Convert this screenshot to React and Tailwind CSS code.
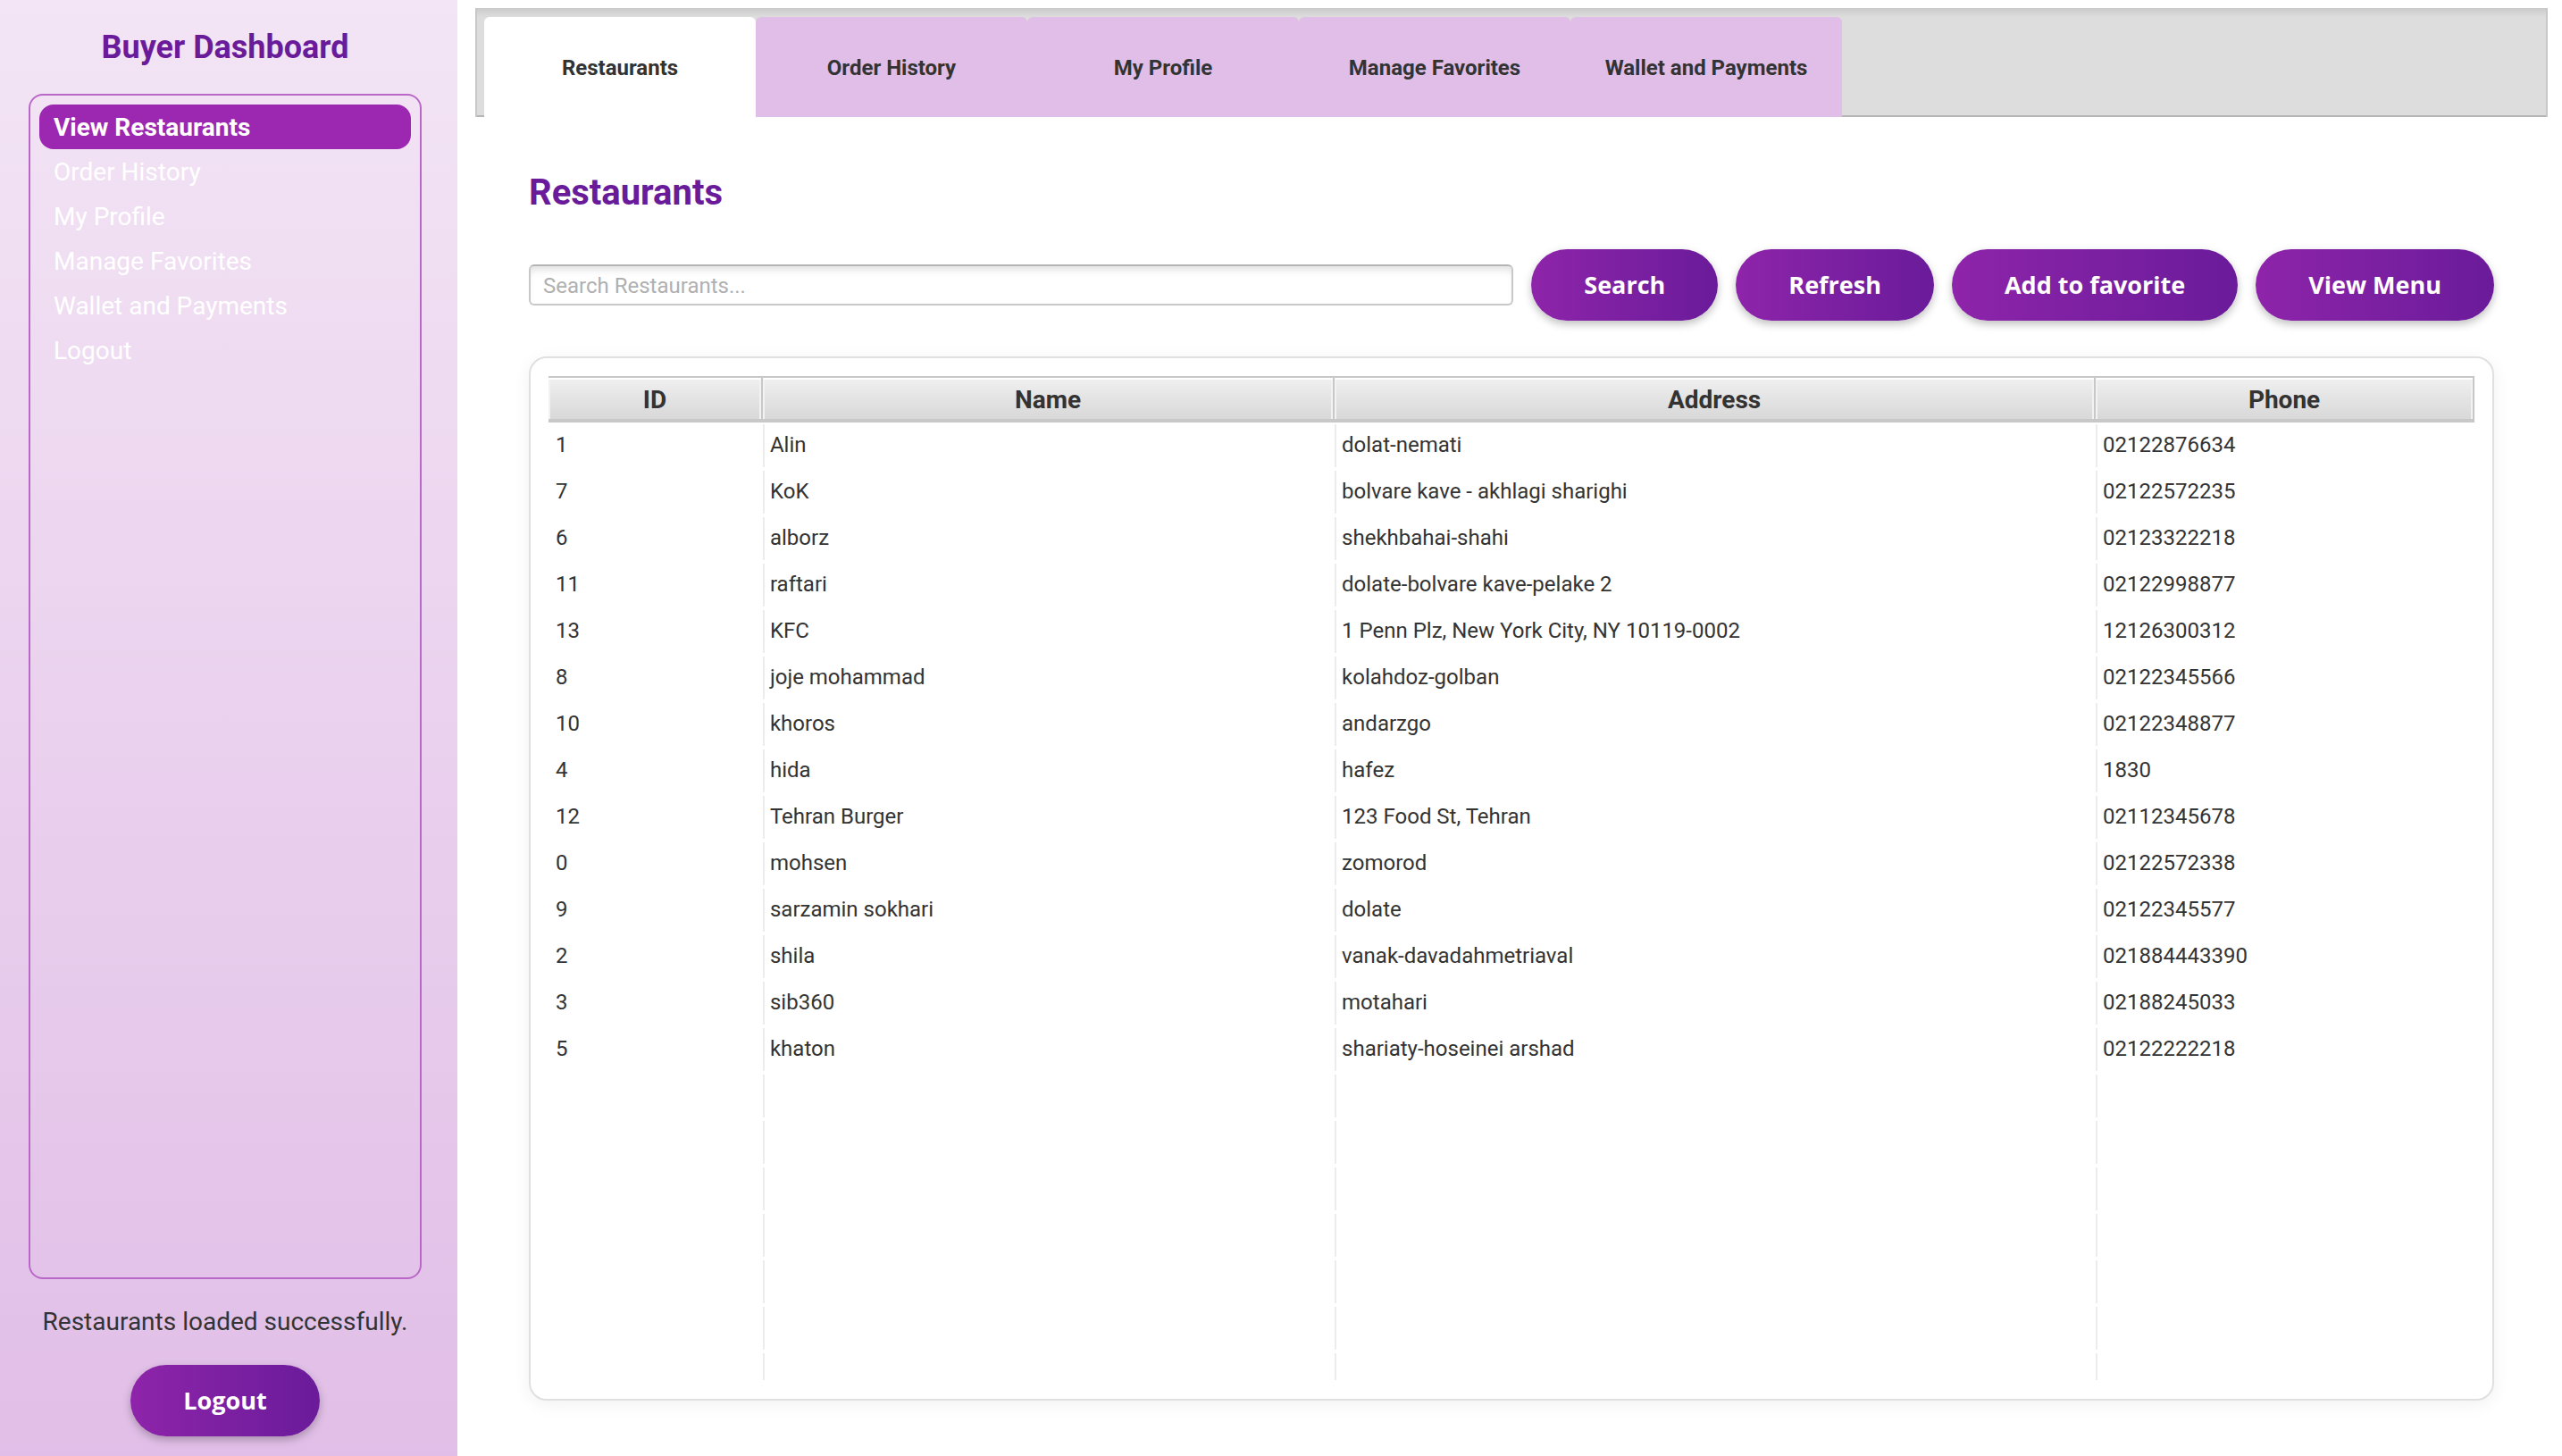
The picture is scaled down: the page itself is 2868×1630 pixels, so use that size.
const NAV = ["View Restaurants", "Order History", "My Profile", "Manage Favorites", "Wallet and Payments", "Logout"];
const TABS = ["Restaurants", "Order History", "My Profile", "Manage Favorites", "Wallet and Payments"];
const ACTIONS = ["Search", "Refresh", "Add to favorite", "View Menu"];
const ROWS = [
  ["1", "Alin", "dolat-nemati", "02122876634"],
  ["7", "KoK", "bolvare kave - akhlagi sharighi", "02122572235"],
  ["6", "alborz", "shekhbahai-shahi", "02123322218"],
  ["11", "raftari", "dolate-bolvare kave-pelake 2", "02122998877"],
  ["13", "KFC", "1 Penn Plz, New York City, NY 10119-0002", "12126300312"],
  ["8", "joje mohammad", "kolahdoz-golban", "02122345566"],
  ["10", "khoros", "andarzgo", "02122348877"],
  ["4", "hida", "hafez", "1830"],
  ["12", "Tehran Burger", "123 Food St, Tehran", "02112345678"],
  ["0", "mohsen", "zomorod", "02122572338"],
  ["9", "sarzamin sokhari", "dolate", "02122345577"],
  ["2", "shila", "vanak-davadahmetriaval", "021884443390"],
  ["3", "sib360", "motahari", "02188245033"],
  ["5", "khaton", "shariaty-hoseinei arshad", "02122222218"],
];
const EMPTY_ROWS = 7;
const COLUMNS = [
  { label: "ID", width: "w-[11.13%]" },
  { label: "Name", width: "w-[29.69%]" },
  { label: "Address", width: "w-[39.52%]" },
  { label: "Phone", width: "w-[19.66%]" },
];

function PillButton({ children }) {
  return (
    <button
      type="button"
      className="h-20 shrink-0 whitespace-nowrap rounded-full bg-linear-to-r from-[#8e24aa] to-[#6a1b9a] px-[59px] font-['Open_Sans',sans-serif] text-[27px] font-bold leading-10 text-white shadow-[0_4px_10px_rgba(0,0,0,0.25)]"
    >
      {children}
    </button>
  );
}

function Sidebar() {
  return (
    <aside className="flex w-[512px] shrink-0 flex-col items-center bg-linear-to-b from-[#f3e5f5] to-[#e1bee7] px-8 pt-8 pb-[22px]">
      <h1 className="mr-2 text-[36px] font-bold leading-[42px] text-[#6a1b9a]">Buyer Dashboard</h1>
      <nav className="mt-[31px] mr-2 w-[440px] flex-1 rounded-2xl border-2 border-[#ba68c8] p-2.5">
        <ul>
          {NAV.map((label, i) => (
            <li key={label}>
              <a
                href="#"
                className={
                  i === 0
                    ? "block rounded-2xl bg-[#9c27b0] px-4 pt-0.5 text-[28px] font-bold leading-[48px] text-white"
                    : "block px-4 pt-0.5 text-[28px] leading-[48px] text-white"
                }
              >
                {label}
              </a>
            </li>
          ))}
        </ul>
      </nav>
      <p className="mt-8 mr-2 text-[28px] leading-8 text-[#333]">Restaurants loaded successfully.</p>
      <div className="mt-8 mr-2 flex">
        <PillButton>Logout</PillButton>
      </div>
    </aside>
  );
}

function TabBar() {
  return (
    <div
      role="tablist"
      className="flex h-[122px] border-x-2 border-[#c8c8c8] bg-linear-to-b from-[#cacaca] to-[#ddd] to-[10px] px-2 pt-2.5 shadow-[inset_0_-2px_0_#b5b5b5]"
    >
      {TABS.map((label, i) => (
        <button
          key={label}
          type="button"
          role="tab"
          aria-selected={i === 0}
          className={
            i === 0
              ? "w-[304px] rounded-t-md bg-white pt-0.5 text-[24px] font-bold leading-7 text-[#333]"
              : "w-[304px] rounded-t-md bg-[#e1bee7] pt-0.5 text-[24px] font-bold leading-7 text-[#333]"
          }
        >
          {label}
        </button>
      ))}
    </div>
  );
}

function RestaurantTable() {
  return (
    <div className="mt-10 flex-1 overflow-hidden rounded-[20px] border-2 border-[#e0e0e0] bg-white p-5 shadow-[0_4px_20px_rgba(0,0,0,0.06)]">
      <div className="h-[1124px] overflow-hidden">
        <table className="w-full table-fixed border-separate border-spacing-0 text-left text-[24px] text-[#333]">
          <thead>
            <tr>
              {COLUMNS.map((c) => (
                <th
                  key={c.label}
                  scope="col"
                  className={`${c.width} h-[52px] border-t-2 border-r-2 border-b-4 border-[#c8c8c8] bg-linear-to-b from-[#f0f0f0] to-[#d8d8d8] p-0 pt-1 text-center text-[28px] font-bold leading-8 shadow-[inset_0_2px_0_#fff,inset_2px_0_0_#f2f2f2,inset_-2px_0_0_#f2f2f2]`}
                >
                  {c.label}
                </th>
              ))}
            </tr>
          </thead>
          <tbody>
            {ROWS.map((row) => (
              <tr key={row[0]}>
                {row.map((cell, i) => (
                  <td key={i} className="h-[52px] p-0">
                    <div className={i > 0 ? "h-12 truncate border-l-2 border-[#ececec] pl-1.5 leading-[46px]" : "h-12 truncate pl-2 leading-[46px]"}>
                      {cell}
                    </div>
                  </td>
                ))}
              </tr>
            ))}
            {Array.from({ length: EMPTY_ROWS }, (_, r) => (
              <tr key={`empty-${r}`}>
                {COLUMNS.map((c, i) => (
                  <td key={c.label} className="h-[52px] p-0">
                    <div className={i > 0 ? "h-12 border-l-2 border-[#ececec]" : "h-12"} />
                  </td>
                ))}
              </tr>
            ))}
          </tbody>
        </table>
      </div>
    </div>
  );
}

export default function App() {
  return (
    <div className="flex min-h-screen bg-white font-[Roboto,sans-serif] text-[#333]">
      <Sidebar />
      <main className="flex min-w-0 flex-1 flex-col pt-[9px] pr-4 pl-5">
        <TabBar />
        <section className="flex flex-1 flex-col px-[60px] pt-[61px] pb-[62px]">
          <h2 className="text-[40px] font-bold leading-12 text-[#6a1b9a]">Restaurants</h2>
          <div className="mt-[39px] flex items-center gap-5">
            <input
              type="text"
              aria-label="Search Restaurants"
              placeholder="Search Restaurants..."
              className="h-[46px] min-w-0 flex-1 rounded-md border-2 border-[#c8c8c8] border-t-[#b5b5b5] bg-white px-3.5 pt-0.5 text-[24px] leading-7 shadow-[inset_0_8px_8px_-4px_rgba(0,0,0,0.12)] outline-none placeholder:text-[#b0b0b0]"
            />
            {ACTIONS.map((label) => (
              <PillButton key={label}>{label}</PillButton>
            ))}
          </div>
          <RestaurantTable />
        </section>
      </main>
    </div>
  );
}
